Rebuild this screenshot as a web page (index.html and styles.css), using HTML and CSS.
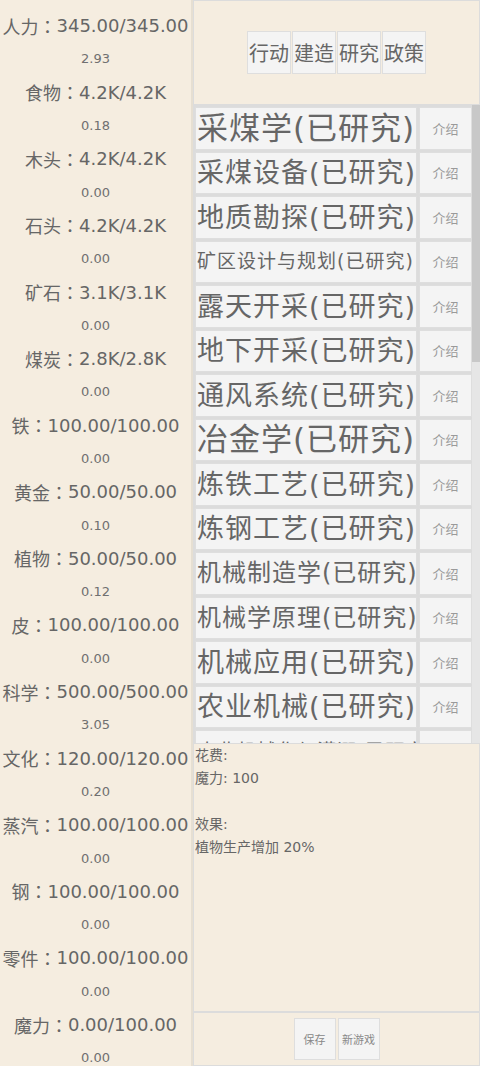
FILE: index.html
```html
<!DOCTYPE html>
<html lang="zh-CN">
<head>
  <meta charset="UTF-8">
  <meta name="viewport" content="width=device-width, initial-scale=1.0">
  <title>文明</title>
  <link rel="stylesheet" href="styles.css">
</head>
<body>
  <div class="app">
    <!-- resources -->
    <aside class="stats">
      <div class="stat">人力<span class="colon">：</span>345.00/345.00</div><div class="rate">2.93</div>
      <div class="stat">食物<span class="colon">：</span>4.2K/4.2K</div><div class="rate">0.18</div>
      <div class="stat">木头<span class="colon">：</span>4.2K/4.2K</div><div class="rate">0.00</div>
      <div class="stat">石头<span class="colon">：</span>4.2K/4.2K</div><div class="rate">0.00</div>
      <div class="stat">矿石<span class="colon">：</span>3.1K/3.1K</div><div class="rate">0.00</div>
      <div class="stat">煤炭<span class="colon">：</span>2.8K/2.8K</div><div class="rate">0.00</div>
      <div class="stat">铁<span class="colon">：</span>100.00/100.00</div><div class="rate">0.00</div>
      <div class="stat">黄金<span class="colon">：</span>50.00/50.00</div><div class="rate">0.10</div>
      <div class="stat">植物<span class="colon">：</span>50.00/50.00</div><div class="rate">0.12</div>
      <div class="stat">皮<span class="colon">：</span>100.00/100.00</div><div class="rate">0.00</div>
      <div class="stat">科学<span class="colon">：</span>500.00/500.00</div><div class="rate">3.05</div>
      <div class="stat">文化<span class="colon">：</span>120.00/120.00</div><div class="rate">0.20</div>
      <div class="stat">蒸汽<span class="colon">：</span>100.00/100.00</div><div class="rate">0.00</div>
      <div class="stat">钢<span class="colon">：</span>100.00/100.00</div><div class="rate">0.00</div>
      <div class="stat">零件<span class="colon">：</span>100.00/100.00</div><div class="rate">0.00</div>
      <div class="stat">魔力<span class="colon">：</span>0.00/100.00</div><div class="rate">0.00</div>
    </aside>

    <main class="main">
      <div class="tabs">
        <button class="tab">行动</button>
        <button class="tab">建造</button>
        <button class="tab">研究</button>
        <button class="tab">政策</button>
      </div>

      <div class="list">
        <div class="rows">
          <div class="row"><button class="tech len3">采煤学(已研究)</button><button class="info">介绍</button></div>
          <div class="row"><button class="tech len4">采煤设备(已研究)</button><button class="info">介绍</button></div>
          <div class="row"><button class="tech len4">地质勘探(已研究)</button><button class="info">介绍</button></div>
          <div class="row"><button class="tech len7">矿区设计与规划(已研究)</button><button class="info">介绍</button></div>
          <div class="row"><button class="tech len4">露天开采(已研究)</button><button class="info">介绍</button></div>
          <div class="row"><button class="tech len4">地下开采(已研究)</button><button class="info">介绍</button></div>
          <div class="row"><button class="tech len4">通风系统(已研究)</button><button class="info">介绍</button></div>
          <div class="row"><button class="tech len3">冶金学(已研究)</button><button class="info">介绍</button></div>
          <div class="row"><button class="tech len4">炼铁工艺(已研究)</button><button class="info">介绍</button></div>
          <div class="row"><button class="tech len4">炼钢工艺(已研究)</button><button class="info">介绍</button></div>
          <div class="row"><button class="tech len5">机械制造学(已研究)</button><button class="info">介绍</button></div>
          <div class="row"><button class="tech len5">机械学原理(已研究)</button><button class="info">介绍</button></div>
          <div class="row"><button class="tech len4">机械应用(已研究)</button><button class="info">介绍</button></div>
          <div class="row"><button class="tech len4">农业机械(已研究)</button><button class="info">介绍</button></div>
          <div class="row"><button class="tech len7">农业机械化与灌溉(已研究)</button><button class="info">介绍</button></div>
        </div>
        <div class="scrollbar"><div class="thumb"></div></div>
      </div>

      <div class="detail">
        <p>花费:</p>
        <p>魔力: 100</p>
        <p class="blank"></p>
        <p>效果:</p>
        <p>植物生产增加 20%</p>
      </div>

      <div class="footer">
        <button class="sys">保存</button>
        <button class="sys">新游戏</button>
      </div>
    </main>
  </div>
</body>
</html>
```

FILE: styles.css
```css
/* General */
body {
  margin: 0;
  font-family: "DejaVu Sans", "Noto Sans CJK SC", sans-serif;
  color: #666;
  background-color: #f5ede0;
}

button {
  font-family: inherit;
  color: inherit;
  background-color: #f4f4f4;
  border: 1px solid #dedede;
  border-radius: 0;
  padding: 0;
  margin: 0;
}

.app {
  display: flex;
  height: 1066px;
  overflow: hidden;
}

/* Left column: resources */
.stats {
  width: 191px;
  flex-shrink: 0;
  border-right: 2px solid #e6dfd2;
  padding-top: 9px;
  overflow: hidden;
}

.stat,
.rate {
  height: 33.3px;
  display: flex;
  align-items: center;
  justify-content: center;
  white-space: nowrap;
}

.stat {
  font-size: 18px;
}

.colon {
  font-family: "Noto Sans CJK TC", sans-serif;
}

.rate {
  font-size: 13px;
  color: #707070;
}

/* Right column */
.main {
  flex: 1;
  min-width: 0;
  display: flex;
  flex-direction: column;
}

.tabs {
  height: 103px;
  border: 1px solid #dcdcdc;
  display: flex;
  justify-content: center;
  align-items: center;
  gap: 1px;
}

.tab {
  width: 44px;
  height: 43px;
  font-size: 20px;
}

/* Research list */
.list {
  height: 638px;
  display: flex;
  background-color: #dcdcdc;
}

.rows {
  flex: 1;
  min-width: 0;
  overflow: hidden;
  padding: 2px 0 0 2px;
  display: flex;
  flex-direction: column;
  gap: 2px;
}

.scrollbar {
  width: 8px;
  flex-shrink: 0;
  background-color: #e6e6e6;
}

.thumb {
  height: 257px;
  background-color: #c8c8c8;
}

.row {
  flex-shrink: 0;
  height: 42.5px;
  display: flex;
  gap: 2px;
}

.tech {
  flex: 1;
  min-width: 0;
  text-align: left;
  line-height: 1;
  letter-spacing: 1px;
  white-space: nowrap;
  overflow: hidden;
  padding-left: 1px;
}

.len3 { font-size: 31px; }
.len4 { font-size: 27px; }
.len5 { font-size: 24px; }
.len7 { font-size: 19px; }

.info {
  width: 53px;
  flex-shrink: 0;
  font-size: 13px;
  color: #9a9a9a;
}

/* Detail */
.detail {
  flex: 1;
  border: 1px solid #dcdcdc;
  font-size: 14px;
  line-height: 23px;
  padding: 0 1px;
}

.detail p {
  margin: 0;
}

.detail .blank {
  height: 23px;
}

.footer {
  height: 52px;
  border: 1px solid #dcdcdc;
  display: flex;
  justify-content: center;
  align-items: center;
  gap: 2px;
}

.sys {
  width: 42px;
  height: 42px;
  font-size: 11px;
  color: #888;
}
```
